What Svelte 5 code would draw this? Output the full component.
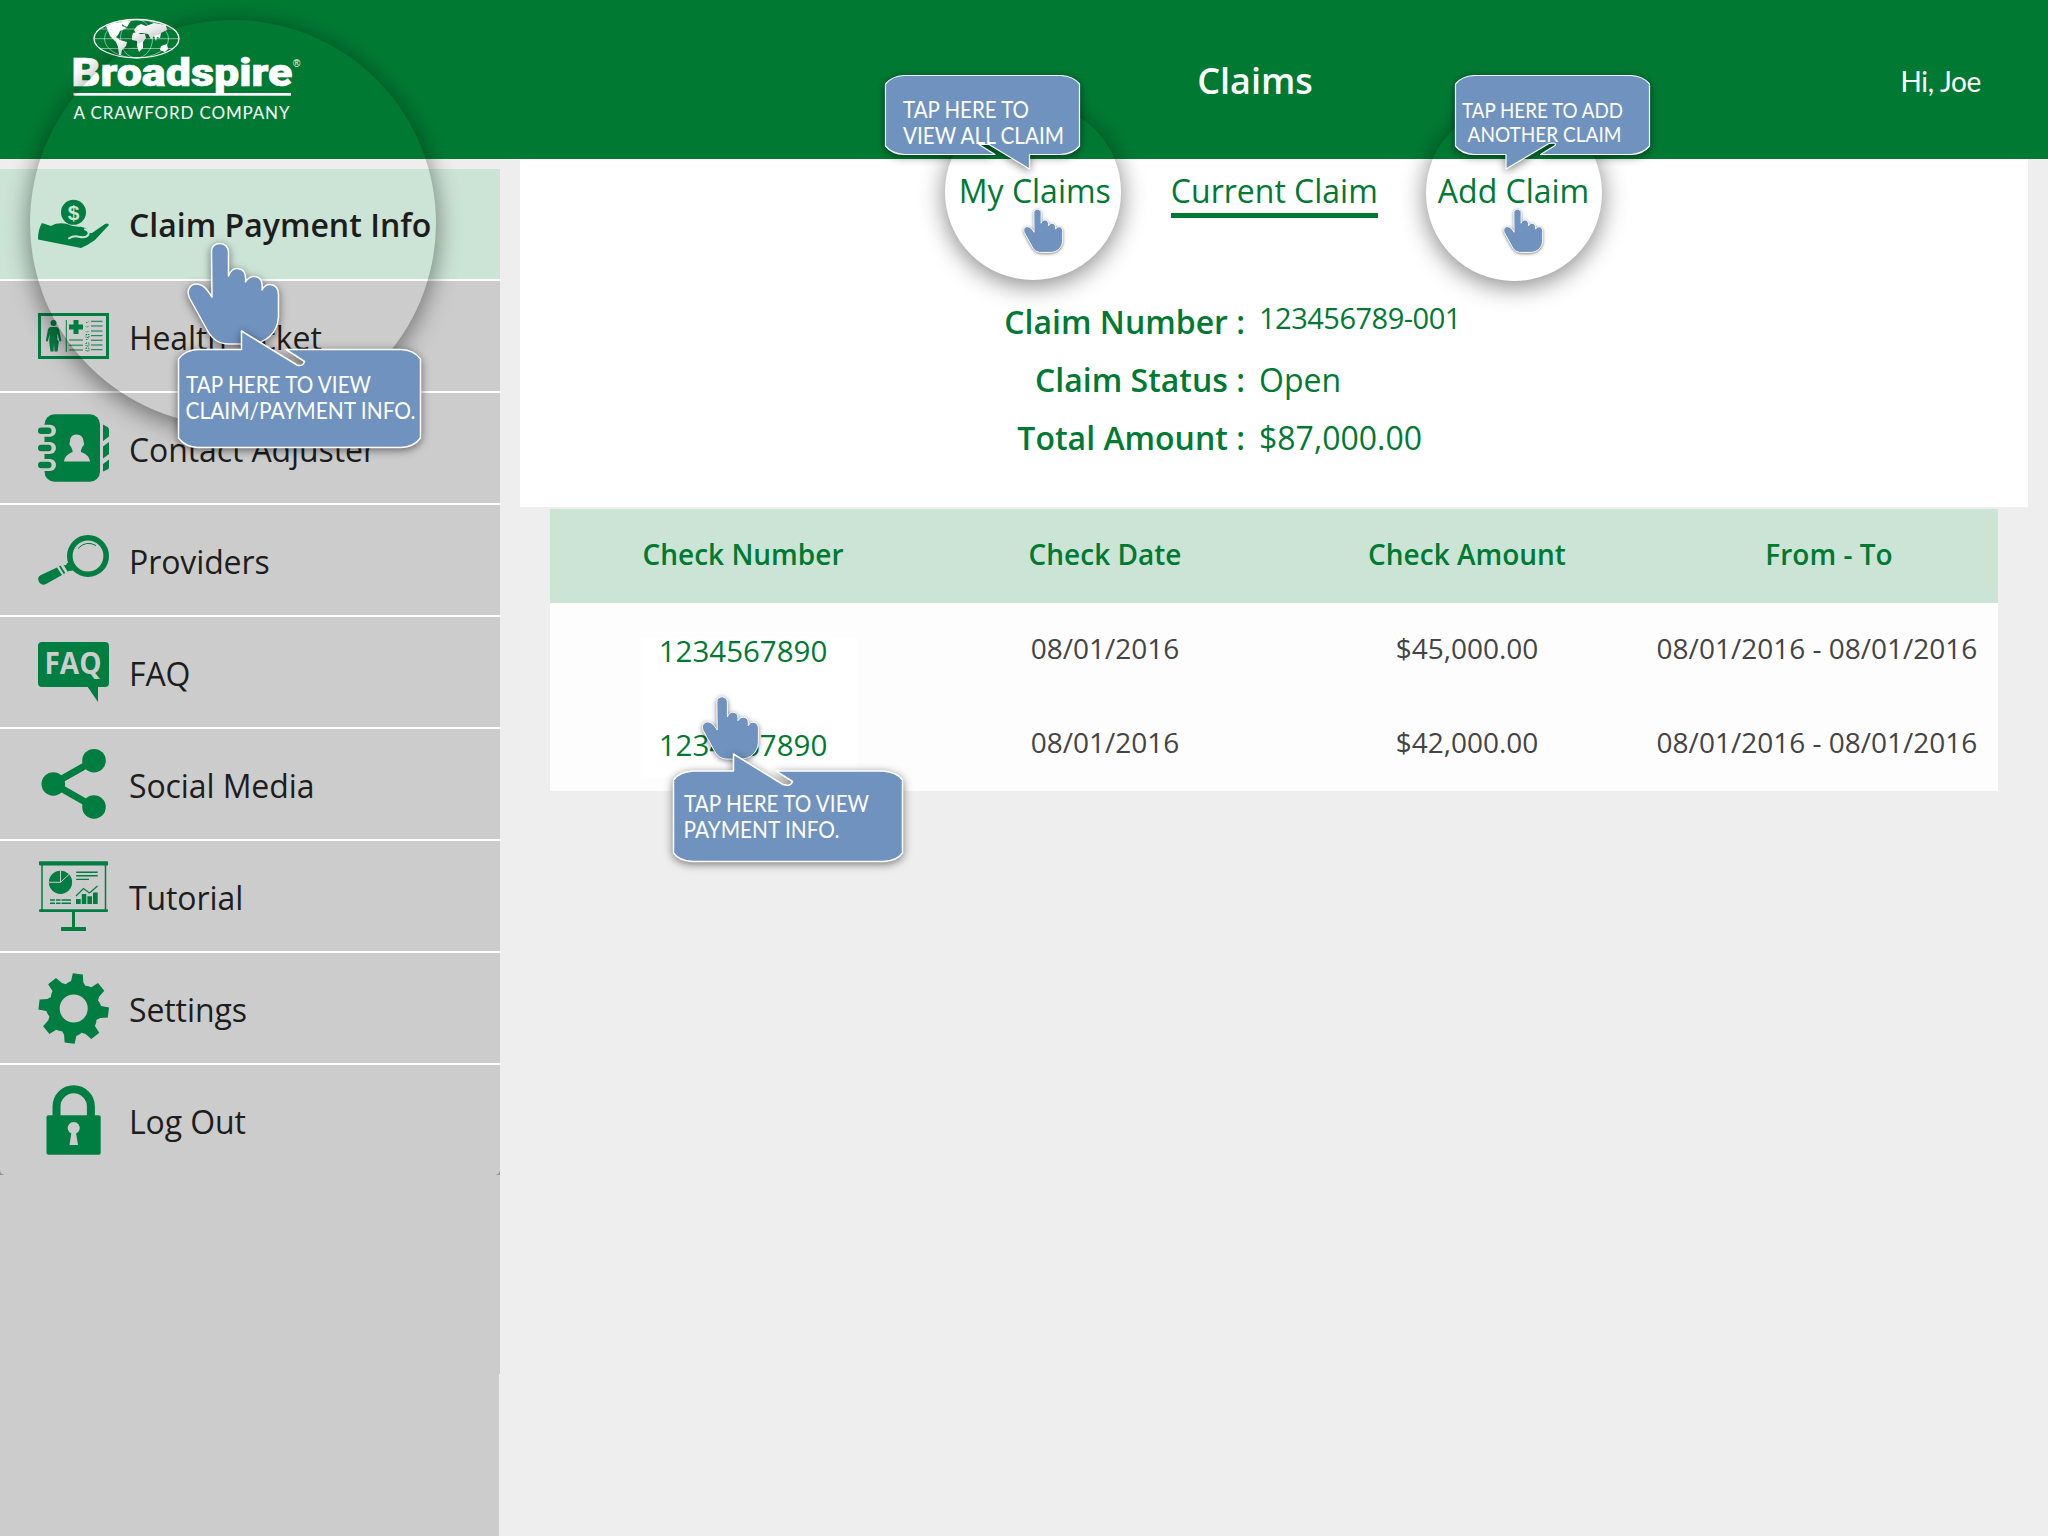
<script>
  const navItems = [
    { id: 'payment', label: 'Claim Payment Info', active: true },
    { id: 'ticket', label: 'Health Ticket' },
    { id: 'contact', label: 'Contact Adjuster' },
    { id: 'providers', label: 'Providers' },
    { id: 'faq', label: 'FAQ' },
    { id: 'social', label: 'Social Media' },
    { id: 'tutorial', label: 'Tutorial' },
    { id: 'settings', label: 'Settings' },
    { id: 'logout', label: 'Log Out' },
  ];

  const columns = ['Check Number', 'Check Date', 'Check Amount', 'From - To'];
  const checks = [
    { number: '1234567890', date: '08/01/2016', amount: '$45,000.00', range: '08/01/2016 - 08/01/2016' },
    { number: '1234567890', date: '08/01/2016', amount: '$42,000.00', range: '08/01/2016 - 08/01/2016' },
  ];

  const handPath =
    'M24.500 54L24 9C24 3 28 .5 32.500 .5S41 4 41 9V33C43 27 47 25 50 25.500C56 26 59 30 58 39C60 35 64 33 67 33.500C73 34 75.500 38 74.500 47C76 43 80 41 83 41.500C88 42 91 46 91 52V74C90 90 78 101 62 101H42C30 101 24 96 18 84L2 55C-2 46 4 41 8.500 41C16 41 20 47 24.500 54Z';

  // Eight-tooth gear outline with a round hole
  function gearPath(cx, cy) {
    let d = '';
    for (let i = 0; i < 8; i++) {
      const a = i * 45 + 7;
      const pts = [[-20, 26.5], [-12.500, 27.5], [-8.500, 35.3], [8, 35.3], [13, 28], [20, 25.5]];
      for (const [deg, r] of pts) {
        const t = ((a + deg) * Math.PI) / 180;
        d += `${d ? 'L' : 'M'}${(cx + r * Math.sin(t)).toFixed(1)} ${(cy - r * Math.cos(t)).toFixed(1)}`;
      }
    }
    return `${d}ZM${cx - 14} ${cy}a14 14 0 1 0 28 0a14 14 0 1 0 -28 0Z`;
  }
</script>

{#snippet icon(id)}
  <svg class="icon" viewBox="0 0 72 72" aria-hidden="true">
    {#if id === 'payment'}
      <circle cx="35.500" cy="24.300" r="12.500" />
      <text class="coin" x="35.500" y="32" text-anchor="middle">$</text>
      <path d="M4 35L13 38C20 34 27 35 33 37.500C38 39 44 38 48 40.500Q51 42 50.500 45L54 45L67 36Q70 34.500 71 37L57 52Q50 57 43 60L0 51.500Q0 41 4 35Z" />
      <path class="cut-mint" d="M31 50.300Q36 47.200 41 48.800Q48 50.500 50.500 46.500Q51.500 42.500 47 41.200" />
    {:else if id === 'ticket'}
      <rect class="line" x="1.500" y="14.500" width="68" height="43" stroke-width="3" />
      <circle cx="15.500" cy="23" r="3" />
      <path d="M12 27h7l2 2 2.500 12-2 .500-2-8-.200 6 1.500 2v1l-1.300 9h-3l-.500-9-.500 9h-3l-1.200-9v-3l.500-6-2 8-2-.500L10 29Z" />
      <path class="line" stroke-width="1" d="M28.300 20v32M31 40h14M31 45.200h14M31 50h14" />
      <path d="M35.500 20h5v4.500h4.500v5h-4.500v4.500h-5v-4.500H31v-5h4.500Z" />
      <path class="line" stroke-width="1" d="M53 21.300h11.500M53 26h11.500M53 31h11.500M53 35.700h11.500M53 40.200h11.500M53 45h11.500M53 49.700h11.500" />
      <path class="line" stroke-width="1" stroke-dasharray="1.200 1" d="M48 22l1 1 2-2M48 26.500l1 1 2-2M48 31.500l1 1 2-2M48 34.500h3v3h-3zM48 39l1 1 2-2M48 43h3v3h-3zM48 48h3v3h-3z" />
    {:else if id === 'contact'}
      <rect x="6.500" y="2.300" width="55.500" height="67.500" rx="10" />
      {#each [18.700, 36, 53] as y}
        <rect class="gray" x="-1" y={y - 6} width="19" height="12" rx="6" />
        <rect x="0" y={y - 3.200} width="13.500" height="6.400" rx="3.200" />
      {/each}
      <path class="gray" d="M38.500 22.500C43 22.500 45.500 25.500 45.500 29.500Q47 33 44.500 34.500C44 37 42.500 37.500 43 40C48 42 51 44 52 49.500H26C27 44 30 42 34.500 40C35 37.500 33.500 37 33 34.500Q30.500 33 32 29.500C32 25.500 34 22.500 38.500 22.500Z" />
      <path d="M65 12.500L69.500 15Q71 16 71 18V24.500L65 29ZM65 34.500L71 30V42L65 46.500ZM65 52L71 47.500V55Q71 56.500 69.500 57.500L65 59.500Z" />
    {:else if id === 'providers'}
      <circle class="line" cx="50" cy="32" r="18.200" stroke-width="5.600" />
      <path class="line" d="M40 24.500Q48 16 58 21.500" stroke-width="1" />
      <path d="M19 43.500L24 51L8 60Q3.500 62 1 58Q-1.500 53 3 51Z" />
      <path d="M21 42.200L22.500 41.500L27.300 49L25.700 50ZM25.500 40.800L27.500 41.500L31 37L36.500 46L29.500 47.500Z" />
    {:else if id === 'faq'}
      <path d="M4 6H67Q71 6 71 10V47Q71 51 67 51H60V66L49.700 51H4Q0 51 0 47V10Q0 6 4 6Z" />
      <text class="faq" x="6.500" y="37.500" textLength="57" lengthAdjust="spacingAndGlyphs">FAQ</text>
    {:else if id === 'social'}
      <path class="line" stroke-width="7" d="M56 12.700L15.300 35.700L56 59" />
      <circle cx="15.300" cy="36" r="11.800" />
      <circle cx="56" cy="12.700" r="11.800" />
      <circle cx="56" cy="59" r="11.800" />
    {:else if id === 'tutorial'}
      <rect x="1" y="1.200" width="69" height="4.300" rx="1" />
      <rect x="1" y="49.200" width="69" height="2.800" rx="1" />
      <path class="line" stroke-width="1.500" d="M4 5V50M67.500 5V50" />
      <path d="M34 51h3v16h10.500q.500 0 .500 1v3H23v-3q0-1 .500-1H34Z" />
      <circle cx="22.500" cy="22.300" r="11.600" />
      <path class="cut" stroke-width="1" d="M11 22.300H22.500V10.500M22.500 22.300L31 14.500" />
      <path class="line" stroke-width="1.400" d="M38.200 12.300H59.700M38.200 15.800H59.700M38.200 19.400H51M12 40H17M18 40H22.500M23.500 40H33M12 43.200H17M18 43.200H22.500M23.500 43.200H33" />
      <path d="M38 39h4.700v5H38ZM43.800 34h4.500v10h-4.500ZM49.400 36.200H54V44h-4.600ZM55 32.500h4.700V44H55Z" />
      <path class="line" stroke-width="1.200" d="M38 36L45.500 28.500L51.500 33L59.500 26" />
    {:else if id === 'settings'}
      <path fill-rule="evenodd" d={gearPath(35.7, 36.5)} />
    {:else if id === 'logout'}
      <path class="line" stroke-width="8" d="M18.500 33V22.500a17.200 17.200 0 0 1 34.400 0V33" />
      <rect x="8.500" y="31.300" width="54.200" height="39.500" rx="2" />
      <path class="gray" d="M33.300 49.500A6 6 0 1 1 38.100 49.500L40 61H31.500Z" />
    {/if}
  </svg>
{/snippet}

{#snippet hand(x, y, s)}
  <path class="shape" class:mini={s < 1} transform="translate({x} {y}) scale({s})" d={handPath} />
{/snippet}

<div class="app">
  <header>
    <svg class="logo" viewBox="0 0 260 130" aria-label="Broadspire, a Crawford company">
      <g class="globe">
        <ellipse cx="66.500" cy="38.700" rx="42.500" ry="19.200" />
        <ellipse cx="66.500" cy="38.700" rx="32" ry="19.200" />
        <ellipse cx="66.500" cy="38.700" rx="16" ry="19.200" />
        <path d="M24 38.700H109M30 29H103M30 48.500H103" />
      </g>
      <path d="M36 26L44 23L53 22L52 26L57 28L50 31L48 35L46 37L50 40L57 42L56 46L52 50L51 55L49 55L48 47L46 42L40 36L38 31ZM52 21L61 20.500L57 27L53 25ZM62 36L63 33L67 32L70 34L75 34L76 38L73 42L73 48L69 52L67 46L67 41L62 40ZM64 30L67 26L71 24L76 26L84 23L96 25L97 30L91 33L90 38L87 37L86 41L84 36L81 39L78 34L72 33L66 33ZM91 46L97 44L98 49L95 52L90 50Z" />
      <text class="brand" x="1.500" y="85.500" textLength="221" lengthAdjust="spacingAndGlyphs">Broadspire</text>
      <text class="reg" x="223" y="67">®</text>
      <rect x="3.500" y="93" width="217.500" height="2.700" />
      <text class="tag" x="3.500" y="118.700" textLength="216" lengthAdjust="spacing">A CRAWFORD COMPANY</text>
    </svg>
    <h1>Claims</h1>
    <span class="user">Hi, Joe</span>
  </header>

  <div class="body">
    <aside>
      <nav>
        {#each navItems as item}
          <a class="item" class:active={item.active}>
            {@render icon(item.id)}
            <span class="label">{item.label}</span>
          </a>
        {/each}
      </nav>
      <div class="rail"></div>
      <div class="rail-end"></div>
    </aside>

    <main>
      <section class="summary">
        <div class="tabs">
          <span class="tab">My Claims</span>
          <span class="tab current">Current Claim</span>
          <span class="tab">Add Claim</span>
        </div>
        <dl>
          <dt>Claim Number :</dt>
          <dd class="num">123456789-001</dd>
          <dt>Claim Status :</dt>
          <dd>Open</dd>
          <dt>Total Amount :</dt>
          <dd>$87,000.00</dd>
        </dl>
      </section>

      <section class="checks">
        <div class="row head">
          {#each columns as c}<span>{c}</span>{/each}
        </div>
        {#each checks as c}
          <div class="row">
            <span class="link">{c.number}</span>
            <span>{c.date}</span>
            <span>{c.amount}</span>
            <span class="range">{c.range}</span>
          </div>
        {/each}
      </section>
    </main>
  </div>

  <div class="spot spot-nav"></div>
  <div class="spot spot-my"></div>
  <div class="spot spot-add"></div>

  <svg class="tips" viewBox="0 0 2048 1536">
    {@render hand(187.5, 243, 1)}
    {@render hand(1023.5, 209, 0.43)}
    {@render hand(1503.5, 209, 0.43)}
    {@render hand(702, 696.5, 0.62)}

    <path class="shape" d="M198 349.500H241.500V331L297 365Q303 367 304.500 361.500L286 349.500H401Q414 350 420.500 359V438Q414 447 401 447.500H198Q185 447 178.500 438V359Q185 350 198 349.500Z" />
    <path class="shape" d="M693 771H733.500V754L783 784.500Q791 787 792.500 781.500L776 771H883Q897 772 902.500 780V853Q897 861 883 861.500H693Q679 861 673.500 853V780Q679 772 693 771Z" />
    <path class="shape thin" d="M904 75.500H1061Q1073 76 1079.500 84V146Q1073 154 1061 154.500H1029.500V169L989 144.500H979L995 154.500H904Q892 154 885.500 146V84Q892 76 904 75.500Z" />
    <path class="shape thin" d="M1474 75.500H1631Q1643 76 1649.500 84V146Q1643 154 1631 154.500H1540.500L1555 145.500Q1557 142 1549 143.500L1506 169V154.500H1474Q1462 154 1455.500 146V84Q1462 76 1474 75.500Z" />

    <g class="tip-text">
      <text x="186" y="393.300" textLength="185" lengthAdjust="spacingAndGlyphs">TAP HERE TO VIEW</text>
      <text x="185.500" y="418.700" textLength="230" lengthAdjust="spacingAndGlyphs">CLAIM/PAYMENT INFO.</text>
      <text x="684" y="812" textLength="185" lengthAdjust="spacingAndGlyphs">TAP HERE TO VIEW</text>
      <text x="683.500" y="838" textLength="156" lengthAdjust="spacingAndGlyphs">PAYMENT INFO.</text>
      <text x="903" y="118" textLength="126" lengthAdjust="spacingAndGlyphs">TAP HERE TO</text>
      <text x="903" y="143.700" textLength="161" lengthAdjust="spacingAndGlyphs">VIEW ALL CLAIM</text>
      <text class="small" x="1462" y="118" textLength="161" lengthAdjust="spacingAndGlyphs">TAP HERE TO ADD</text>
      <text class="small" x="1467.500" y="142" textLength="154" lengthAdjust="spacingAndGlyphs">ANOTHER CLAIM</text>
    </g>
  </svg>
</div>

<style>
  :global(body) {
    margin: 0;
    overflow: hidden;
  }
  .app {
    position: relative;
    width: 2048px;
    height: 1536px;
    overflow: hidden;
    background: #eeeeee;
    font-family: 'Open Sans', 'Noto Sans', sans-serif;
    font-size: 32px;
    color: #1d1d1d;
    display: flex;
    flex-direction: column;
  }
  header {
    height: 159px;
    flex: none;
    background: #007a33;
    color: #fff;
    display: grid;
    grid-template-columns: 450px 1470px auto;
    padding-left: 70px;
    box-sizing: border-box;
    position: relative;
  }
  .logo {
    width: 260px;
    height: 130px;
    fill: #fff;
    overflow: visible;
  }
  .globe {
    fill: none;
    stroke: #fff;
    stroke-width: 0.5;
  }
  .globe ellipse:first-child {
    stroke-width: 1.3;
  }
  .brand {
    font: 900 38px Roboto, sans-serif;
    stroke: #fff;
    stroke-width: 0.6;
  }
  .reg {
    font: 10px 'Liberation Sans', sans-serif;
  }
  .tag {
    font: 17px Lato, sans-serif;
  }
  h1 {
    margin: 0;
    font-size: 36px;
    font-weight: 600;
    line-height: 162px;
    text-align: center;
  }
  .user {
    position: absolute;
    right: 67px;
    top: 63px;
    font-family: Lato, sans-serif;
    font-size: 28px;
    letter-spacing: -0.3px;
    line-height: 36px;
    white-space: nowrap;
  }
  .body {
    flex: 1;
    display: flex;
    gap: 20px;
  }
  aside {
    width: 500px;
    padding-top: 10px;
    display: flex;
    flex-direction: column;
  }
  nav {
    background: #8f8f8f;
  }
  .item {
    display: flex;
    align-items: center;
    gap: 19px;
    height: 110px;
    padding-left: 38px;
    background: #cccccc;
    border-bottom: 2px solid #fff;
    white-space: nowrap;
  }
  .item:last-child {
    border-bottom: 0;
    border-radius: 0 0 5px 5px;
  }
  .item.active {
    background: #cce4d6;
    font-weight: 600;
  }
  .label {
    padding-top: 2px;
    letter-spacing: -0.1px;
  }
  .active .label {
    padding-top: 0;
    letter-spacing: 0;
  }
  .rail {
    height: 199px;
    background: #cccccc;
  }
  .rail-end {
    flex: 1;
    width: 499px;
    background: #cccccc;
  }
  .icon {
    width: 72px;
    height: 72px;
    fill: #007d41;
    flex: none;
    overflow: visible;
  }
  .line {
    fill: none;
    stroke: #007d41;
  }
  .cut {
    fill: none;
    stroke: #cccccc;
  }
  .cut-mint {
    fill: none;
    stroke: #cce4d6;
    stroke-width: 2;
    stroke-linecap: round;
  }
  .gray {
    fill: #cccccc;
  }
  .coin {
    fill: #cce4d6;
    font: 700 21px 'Liberation Sans', sans-serif;
  }
  .faq {
    fill: #cccccc;
    font: 700 30px 'Open Sans', sans-serif;
  }
  main {
    width: 1508px;
  }
  .summary {
    height: 348px;
    box-sizing: border-box;
    padding-top: 8px;
    background: #fff;
    color: #007a33;
  }
  .tabs {
    display: flex;
    justify-content: center;
    gap: 60px;
  }
  .tab {
    height: 46px;
    line-height: 48px;
    border-bottom: 5px solid transparent;
  }
  .tab.current {
    border-color: #007a33;
  }
  dl {
    margin: 74px 0 0;
    display: grid;
    grid-template-columns: 725px 1fr;
    column-gap: 14px;
    grid-auto-rows: 58px;
    line-height: 59px;
  }
  dt {
    text-align: right;
    font-weight: 600;
  }
  dd {
    margin: 0;
  }
  .num {
    font-size: 29px;
    line-height: 52px;
    letter-spacing: -0.5px;
  }
  .checks {
    margin: 2px 30px 0;
    background: #fdfdfd;
    color: #444;
    font-size: 28px;
    position: relative;
  }
  .checks::before {
    content: '';
    position: absolute;
    left: 91px;
    top: 129px;
    width: 216px;
    height: 139px;
    background: #fff;
  }
  .row {
    position: relative;
    display: grid;
    grid-template-columns: repeat(4, 362px);
    padding-left: 12px;
    height: 94px;
    line-height: 90px;
    text-align: center;
    white-space: nowrap;
  }
  .head {
    background: #cce4d6;
    color: #007a33;
    font-weight: 600;
  }
  .link {
    color: #007a33;
    font-size: 29.500px;
    line-height: 96px;
  }
  .range {
    padding-right: 24px;
  }
  .spot {
    position: absolute;
    border-radius: 50%;
    box-shadow: 0 5px 24px 1px rgba(0, 0, 0, 0.46);
  }
  .spot-nav {
    left: 30px;
    top: 20px;
    width: 406px;
    height: 406px;
  }
  .spot-my {
    left: 945px;
    top: 104px;
    width: 176px;
    height: 176px;
  }
  .spot-add {
    left: 1426px;
    top: 105px;
    width: 176px;
    height: 176px;
  }
  .tips {
    position: absolute;
    left: 0;
    top: 0;
    width: 2048px;
    height: 1536px;
  }
  .shape {
    fill: #6f92bf;
    stroke: #fff;
    stroke-width: 1.500;
    stroke-linejoin: round;
    vector-effect: non-scaling-stroke;
    filter: drop-shadow(0 2px 4px rgba(0, 0, 0, 0.5));
  }
  .thin {
    stroke-width: 1.200;
  }
  .mini {
    stroke-width: 1;
  }
  .tip-text {
    fill: #fff;
    font: 23.500px Lato, sans-serif;
  }
  .small {
    font-size: 21px;
  }
</style>
